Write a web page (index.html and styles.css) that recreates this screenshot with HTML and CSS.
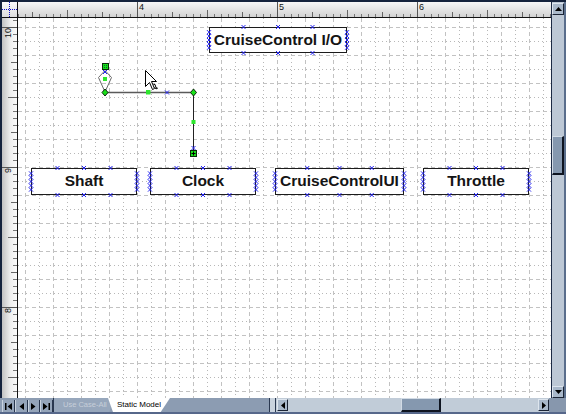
FILE: index.html
```html
<!DOCTYPE html>
<html>
<head>
<meta charset="utf-8">
<link rel="stylesheet" href="styles.css">
</head>
<body>
<div class="app">
  <div class="corner">
    <svg width="15" height="15"><line class="cross" x1="7.5" y1="0" x2="7.5" y2="15"/><line class="cross" x1="0" y1="7.5" x2="15" y2="7.5"/></svg>
  </div>
  <div class="hruler">
    <span class="rl rl4">4</span><span class="rl rl5">5</span><span class="rl rl6">6</span>
  </div>
  <div class="vscroll">
    <div class="sbtn sbtn-v"><svg width="7" height="4"><path d="M0,4L3.5,0L7,4Z"/></svg></div>
    <div class="vtrack"><div class="vthumb"></div></div>
    <div class="sbtn sbtn-v"><svg width="7" height="4"><path d="M0,0L3.5,4L7,0Z"/></svg></div>
  </div>
  <div class="vruler">
    <span class="vl vl10">10</span><span class="vl vl9">9</span><span class="vl vl8">8</span>
  </div>
  <div class="canvas">
    <svg class="grid" width="533" height="380">
      <defs>
        <pattern id="gp" width="28" height="28" patternUnits="userSpaceOnUse">
          <line class="gd" x1="0" y1="9.5" x2="28" y2="9.5"/>
          <line class="gt" x1="0" y1="23.5" x2="28" y2="23.5"/>
          <line class="gd" x1="7.5" y1="0" x2="7.5" y2="28"/>
          <line class="gt" x1="21.5" y1="0" x2="21.5" y2="28"/>
        </pattern>
        <path id="xm" d="M-2,-2L2,2M2,-2L-2,2" stroke="#2424f0" stroke-width="1" fill="none"/>
      </defs>
      <rect width="533" height="380" fill="url(#gp)"/>
    </svg>

    <div class="shape s-ccio">CruiseControl I/O
      <svg class="marks"><use href="#xm" x="25%" y="0"/><use href="#xm" x="50%" y="0"/><use href="#xm" x="75%" y="0"/><use href="#xm" x="25%" y="100%"/><use href="#xm" x="50%" y="100%"/><use href="#xm" x="75%" y="100%"/><use href="#xm" x="0" y="20%"/><use href="#xm" x="0" y="35%"/><use href="#xm" x="0" y="50%"/><use href="#xm" x="0" y="65%"/><use href="#xm" x="0" y="80%"/><use href="#xm" x="100%" y="20%"/><use href="#xm" x="100%" y="35%"/><use href="#xm" x="100%" y="50%"/><use href="#xm" x="100%" y="65%"/><use href="#xm" x="100%" y="80%"/></svg>
    </div>
    <div class="shape s-shaft">Shaft
      <svg class="marks"><use href="#xm" x="25%" y="0"/><use href="#xm" x="50%" y="0"/><use href="#xm" x="75%" y="0"/><use href="#xm" x="25%" y="100%"/><use href="#xm" x="50%" y="100%"/><use href="#xm" x="75%" y="100%"/><use href="#xm" x="0" y="20%"/><use href="#xm" x="0" y="35%"/><use href="#xm" x="0" y="50%"/><use href="#xm" x="0" y="65%"/><use href="#xm" x="0" y="80%"/><use href="#xm" x="100%" y="20%"/><use href="#xm" x="100%" y="35%"/><use href="#xm" x="100%" y="50%"/><use href="#xm" x="100%" y="65%"/><use href="#xm" x="100%" y="80%"/></svg>
    </div>
    <div class="shape s-clock">Clock
      <svg class="marks"><use href="#xm" x="25%" y="0"/><use href="#xm" x="50%" y="0"/><use href="#xm" x="75%" y="0"/><use href="#xm" x="25%" y="100%"/><use href="#xm" x="50%" y="100%"/><use href="#xm" x="75%" y="100%"/><use href="#xm" x="0" y="20%"/><use href="#xm" x="0" y="35%"/><use href="#xm" x="0" y="50%"/><use href="#xm" x="0" y="65%"/><use href="#xm" x="0" y="80%"/><use href="#xm" x="100%" y="20%"/><use href="#xm" x="100%" y="35%"/><use href="#xm" x="100%" y="50%"/><use href="#xm" x="100%" y="65%"/><use href="#xm" x="100%" y="80%"/></svg>
    </div>
    <div class="shape s-ccui">CruiseControlUI
      <svg class="marks"><use href="#xm" x="25%" y="0"/><use href="#xm" x="50%" y="0"/><use href="#xm" x="75%" y="0"/><use href="#xm" x="25%" y="100%"/><use href="#xm" x="50%" y="100%"/><use href="#xm" x="75%" y="100%"/><use href="#xm" x="0" y="20%"/><use href="#xm" x="0" y="35%"/><use href="#xm" x="0" y="50%"/><use href="#xm" x="0" y="65%"/><use href="#xm" x="0" y="80%"/><use href="#xm" x="100%" y="20%"/><use href="#xm" x="100%" y="35%"/><use href="#xm" x="100%" y="50%"/><use href="#xm" x="100%" y="65%"/><use href="#xm" x="100%" y="80%"/></svg>
    </div>
    <div class="shape s-throttle">Throttle
      <svg class="marks"><use href="#xm" x="25%" y="0"/><use href="#xm" x="50%" y="0"/><use href="#xm" x="75%" y="0"/><use href="#xm" x="25%" y="100%"/><use href="#xm" x="50%" y="100%"/><use href="#xm" x="75%" y="100%"/><use href="#xm" x="0" y="20%"/><use href="#xm" x="0" y="35%"/><use href="#xm" x="0" y="50%"/><use href="#xm" x="0" y="65%"/><use href="#xm" x="0" y="80%"/><use href="#xm" x="100%" y="20%"/><use href="#xm" x="100%" y="35%"/><use href="#xm" x="100%" y="50%"/><use href="#xm" x="100%" y="65%"/><use href="#xm" x="100%" y="80%"/></svg>
    </div>

    <svg class="connector" width="200" height="150">
      <line x1="87" y1="74.5" x2="175" y2="74.5" stroke="#5a5a5a" stroke-width="1.5"/>
      <line x1="175.5" y1="74" x2="175.5" y2="132" stroke="#222" stroke-width="1"/>
      <polygon points="87,52.5 80.5,59.5 87,74 93.5,59.5" fill="none" stroke="#6a6a6a" stroke-width="1"/>
      <use href="#xm" x="87" y="54"/>
      <use href="#xm" x="149" y="74.5"/>
      <use href="#xm" x="175.5" y="130"/>
      <rect class="gh" x="84.5" y="45.5" width="6" height="6"/>
      <rect x="86" y="47" width="1" height="1" fill="#063"/><rect x="88" y="49" width="1" height="1" fill="#063"/><rect x="88" y="47" width="1" height="1" fill="#063"/><rect x="86" y="49" width="1" height="1" fill="#063"/>
      <rect class="gs" x="85" y="59" width="4" height="4"/>
      <rect class="gs" x="128" y="72" width="4.5" height="4.5"/>
      <rect class="gs" x="173.5" y="102" width="4" height="4"/>
      <polygon class="gh" points="87,71 90,74.5 87,78 84,74.5"/>
      <polygon class="gh" points="175.5,71 178.5,74.5 175.5,78 172.5,74.5"/>
      <rect class="gh" x="172.5" y="132.5" width="6" height="6"/>
      <path d="M175.5,133.5V137.5M173.5,135.5H177.5" stroke="#000" stroke-width="1"/>
    </svg>

    <svg class="cursor" width="16" height="24">
      <path d="M1.5,1.5 L1.5,17.5 L5.5,13.5 L8.5,20.5 L10.5,19.5 L7.5,12.5 L12.5,12.5 Z" fill="#fff" stroke="#000" stroke-width="1"/>
      <path d="M9.5,15.5 q2,-1 2,1.5 t2,2 M10.5,18.5 q1.5,2 3,1" fill="none" stroke="#000" stroke-width="1"/>
    </svg>
  </div>

  <div class="bottombar">
    <div class="nav">
      <div class="nb"><svg width="7" height="7"><path d="M0,0H1.5V7H0Z M7,0V7L2.5,3.5Z"/></svg></div>
      <div class="nb"><svg width="5" height="7"><path d="M5,0V7L0.5,3.5Z"/></svg></div>
      <div class="nb"><svg width="5" height="7"><path d="M0,0V7L4.5,3.5Z"/></svg></div>
      <div class="nb"><svg width="7" height="7"><path d="M0,0V7L4.5,3.5Z M5.5,0H7V7H5.5Z"/></svg></div>
    </div>
    <div class="tabs">
      <div class="tab tab-off">Use Case-All</div>
      <div class="tab tab-on">Static Model</div>
    </div>
    <div class="spacer"></div>
    <div class="split"></div>
    <div class="hscroll">
      <div class="sbtn sbtn-h"><svg width="4" height="7"><path d="M4,0V7L0,3.5Z"/></svg></div>
      <div class="htrack"><div class="hthumb"></div></div>
      <div class="sbtn sbtn-h"><svg width="4" height="7"><path d="M0,0V7L4,3.5Z"/></svg></div>
    </div>
    <div class="corner2"></div>
  </div>
</div>
</body>
</html>
```
FILE: styles.css
```css
* { box-sizing: border-box; }
html, body { margin: 0; padding: 0; }
body {
  width: 566px;
  height: 414px;
  overflow: hidden;
  font-family: "Liberation Sans", Arial, sans-serif;
}
.app {
  width: 566px;
  height: 414px;
  background: #15233d;
  padding: 2px 0 0 2px;
  display: grid;
  grid-template-columns: 16px 533px 15px;
  grid-template-rows: 16px 380px 16px;
}

/* corner */
.corner {
  background: linear-gradient(#fbfbfb, #dcdcdc);
  border-right: 1px solid #111;
  border-bottom: 1px solid #111;
}
.corner svg { display: block; }
.cross { stroke: #1010c8; stroke-width: 1; stroke-dasharray: 1 1; }

/* horizontal ruler */
.hruler {
  position: relative;
  border-bottom: 1px solid #111;
  background:
    linear-gradient(to right, #555 1px, transparent 1px) left 119px bottom 0 / 140px 15px repeat-x,
    linear-gradient(to right, #666 1px, transparent 1px) left 49px bottom 0 / 70px 7px repeat-x,
    linear-gradient(to right, #666 1px, transparent 1px) left 14px bottom 0 / 35px 5px repeat-x,
    linear-gradient(to right, #777 1px, transparent 1px) left 0 bottom 0 / 7px 3px repeat-x,
    linear-gradient(#f7f7f7, #d2d2d2);
}
.rl {
  position: absolute;
  top: 0;
  font-size: 9px;
  line-height: 10px;
  color: #111;
}
.rl4 { left: 121px; }
.rl5 { left: 261px; }
.rl6 { left: 401px; }

/* vertical ruler */
.vruler {
  position: relative;
  border-right: 1px solid #111;
  background:
    linear-gradient(to bottom, #555 1px, transparent 1px) right 0 top 9px / 15px 140px repeat-y,
    linear-gradient(to bottom, #666 1px, transparent 1px) right 0 top 9px / 9px 70px repeat-y,
    linear-gradient(to bottom, #666 1px, transparent 1px) right 0 top 9px / 6px 35px repeat-y,
    linear-gradient(to bottom, #777 1px, transparent 1px) right 0 top 2px / 4px 7px repeat-y,
    linear-gradient(to right, #c2c2c2, #eeeeee 55%, #fafafa);
}
.vl {
  position: absolute;
  left: 2px;
  font-size: 9px;
  line-height: 9px;
  color: #111;
  writing-mode: vertical-rl;
  transform: rotate(180deg);
}
.vl10 { top: 10px; }
.vl9 { top: 150px; }
.vl8 { top: 290px; }

/* vertical scrollbar */
.vscroll {
  grid-column: 3;
  grid-row: 1 / span 2;
  display: flex;
  flex-direction: column;
  background: #bdc8d5;
  border-left: 1px solid #1c2a44;
  border-right: 2px solid #5a6e8c;
}
.sbtn {
  display: flex;
  align-items: center;
  justify-content: center;
  background: #a9b8ca;
  border-top: 1px solid #dde5ee;
  border-left: 1px solid #dde5ee;
  border-right: 1px solid #1b2435;
  border-bottom: 1px solid #1b2435;
}
.sbtn svg { display: block; fill: #000; }
.sbtn-v { height: 12px; margin-top: 1px; flex: none; }
.vtrack { flex: 1; }
.vthumb {
  margin-top: 121px;
  height: 39px;
  background: #8598af;
  border-top: 1px solid #d2dbe5;
  border-left: 1px solid #d2dbe5;
  border-right: 2px solid #0e1420;
  border-bottom: 2px solid #0e1420;
}

/* canvas */
.canvas {
  position: relative;
  background: #fff;
  overflow: hidden;
}
.grid { display: block; }
.gd { stroke: #c2c2c2; stroke-width: 1; stroke-dasharray: 4 3; }
.gt { stroke: #b8b8b8; stroke-width: 1; stroke-dasharray: 1 3; }

.shape {
  position: absolute;
  border: 1px solid #1c1c1c;
  background: #fff;
  display: flex;
  align-items: center;
  justify-content: center;
  font-weight: bold;
  font-size: 15.5px;
  color: #141414;
  white-space: nowrap;
  padding-bottom: 1px;
}
.marks {
  position: absolute;
  left: -1px;
  top: -1px;
  width: calc(100% + 2px);
  height: calc(100% + 2px);
  overflow: visible;
}
.s-ccio { left: 191px; top: 9px; width: 138px; height: 26px; }
.s-shaft { left: 13px; top: 150px; width: 106px; height: 27px; }
.s-clock { left: 132px; top: 150px; width: 106px; height: 27px; }
.s-ccui { left: 257px; top: 150px; width: 129px; height: 27px; }
.s-throttle { left: 405px; top: 150px; width: 106px; height: 27px; }

.connector {
  position: absolute;
  left: 0;
  top: 0;
  overflow: visible;
}
.gh { fill: #19e019; stroke: #0a2a0a; stroke-width: 1; }
.gs { fill: #2ee62e; stroke: none; }

.cursor {
  position: absolute;
  left: 126px;
  top: 51px;
}

/* bottom bar */
.bottombar {
  grid-column: 1 / span 3;
  display: flex;
  background: #8c9cb2;
  border-bottom: 2px solid #56678a;
  margin-left: -2px;
}
.nav {
  width: 53px;
  display: flex;
  padding: 2px 0 0 2px;
}
.nb {
  width: 12.75px;
  display: flex;
  align-items: center;
  justify-content: center;
  background: #94a4b9;
  border-left: 1px solid #c9d3df;
  border-right: 1px solid #2a3850;
}
.nb svg { display: block; fill: #000; }
.tabs {
  width: 117px;
  position: relative;
  display: flex;
}
.tab {
  height: 14px;
  font-size: 7.5px;
  line-height: 14px;
  white-space: nowrap;
}
.tab-off {
  width: 60px;
  padding-left: 9px;
  color: #c7cfda;
  background: #97a7bc;
  border-left: 1px solid #2a3850;
  clip-path: polygon(0 0, 100% 0, 94% 100%, 0 100%);
}
.tab-on {
  width: 62px;
  margin-left: -5px;
  padding-left: 9px;
  color: #000;
  background: #fff;
  font-size: 8px;
  clip-path: polygon(0 0, 100% 0, 85% 100%, 8% 100%);
}
.spacer { flex: 1; }
.split {
  width: 7px;
  background: #c9d3de;
  border-left: 1px solid #2a3850;
  border-right: 1px solid #2a3850;
}
.hscroll {
  width: 273px;
  display: flex;
  background: #c1ccd8;
  padding-left: 1px;
}
.sbtn-h { width: 11px; height: 12px; margin-top: 1px; flex: none; }
.htrack { flex: 1; }
.hthumb {
  margin-left: 113px;
  width: 40px;
  height: 14px;
  background: #8598af;
  border-top: 1px solid #d2dbe5;
  border-left: 1px solid #d2dbe5;
  border-right: 2px solid #0e1420;
  border-bottom: 2px solid #0e1420;
}
.corner2 {
  width: 17px;
  background: #8797ad;
}
```
